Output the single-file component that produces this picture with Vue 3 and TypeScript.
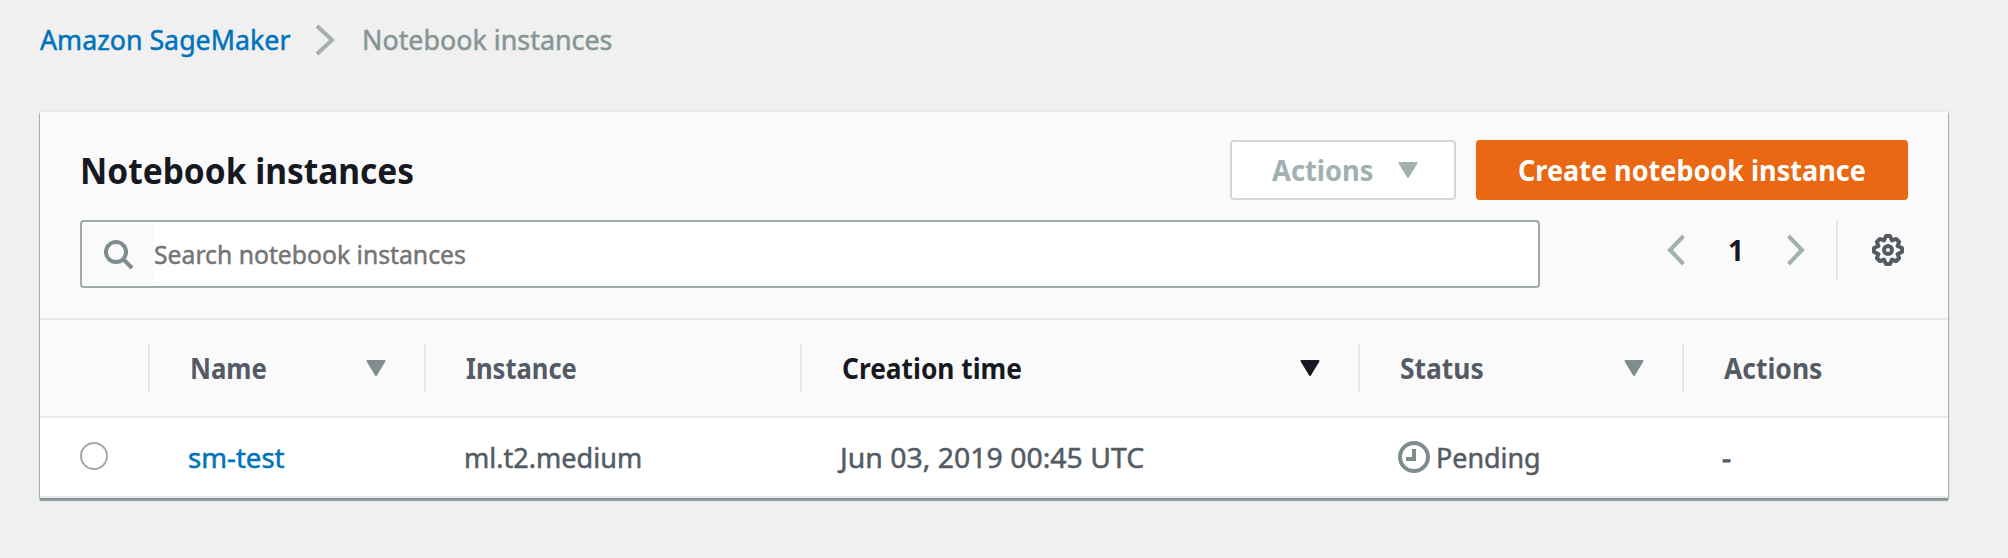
<script setup lang="ts">
interface Column {
  key: string
  label: string
  stretch: number
  sortable: boolean
  active?: boolean
}

interface Instance {
  name: string
  type: string
  created: string
  status: string
  actions: string
}

const columns: Column[] = [
  { key: 'name', label: 'Name', stretch: 0.92, sortable: true },
  { key: 'type', label: 'Instance', stretch: 0.913, sortable: false },
  { key: 'created', label: 'Creation time', stretch: 0.94, sortable: true, active: true },
  { key: 'status', label: 'Status', stretch: 0.943, sortable: true },
  { key: 'actions', label: 'Actions', stretch: 0.945, sortable: false },
]

const instances: Instance[] = [
  { name: 'sm-test', type: 'ml.t2.medium', created: 'Jun 03, 2019 00:45 UTC', status: 'Pending', actions: '-' },
]

const stretchX = (value: number) => ({ transform: `scaleX(${value})` })
</script>

<template>
  <div class="page">
    <nav class="breadcrumb">
      <a class="crumb link"><span class="t" :style="stretchX(0.956)">Amazon SageMaker</span></a>
      <svg class="sep" width="20" height="32" viewBox="0 0 20 32"><path d="M2 2L17 16L2 30" /></svg>
      <span class="crumb current"><span class="t" :style="stretchX(0.959)">Notebook instances</span></span>
    </nav>

    <section class="panel">
      <header class="head">
        <div class="title-row">
          <h1><span class="t" :style="stretchX(0.93)">Notebook instances</span></h1>
          <button class="btn disabled">
            <span class="t" :style="stretchX(0.975)">Actions</span>
            <svg class="caret" width="20" height="16" viewBox="0 0 20 16"><path d="M1.5 1H18.5L10 15Z" /></svg>
          </button>
          <button class="btn primary"><span class="t" :style="stretchX(0.965)">Create notebook instance</span></button>
        </div>
        <div class="filter-row">
          <div class="search">
            <span class="search-icon">
              <svg width="30" height="30" viewBox="0 0 30 30"><circle cx="12" cy="12" r="10" /><path d="M19 19L28 28" /></svg>
            </span>
            <span class="search-input"><span class="t" :style="stretchX(0.951)">Search notebook instances</span></span>
          </div>
          <div class="pager">
            <svg class="arrow" width="20" height="32" viewBox="0 0 20 32"><path d="M17.5 2L4 16L17.5 30" /></svg>
            <span class="page-number">1</span>
            <svg class="arrow" width="20" height="32" viewBox="0 0 20 32"><path d="M2.5 2L16 16L2.5 30" /></svg>
          </div>
          <div class="settings">
            <svg width="32" height="32" viewBox="0 0 32 32">
              <path d="M14 2H18L20 6.4L24.2 4.9L27.1 7.8L25.6 12L30 14V18L25.6 20L27.1 24.2L24.2 27.1L20 25.6L18 30H14L12 25.6L7.8 27.1L4.9 24.2L6.4 20L2 18V14L6.4 12L4.9 7.8L7.8 4.9L12 6.4Z" />
              <circle cx="16" cy="16" r="4" />
            </svg>
          </div>
        </div>
      </header>

      <div class="row columns">
        <div class="cell"></div>
        <div v-for="col in columns" :key="col.key" class="cell column" :class="{ active: col.active }">
          <span class="t" :style="stretchX(col.stretch)">{{ col.label }}</span>
          <svg v-if="col.sortable" class="caret" width="20" height="16" viewBox="0 0 20 16"><path d="M1.5 1H18.5L10 15Z" /></svg>
        </div>
      </div>

      <div v-for="item in instances" :key="item.name" class="row record">
        <div class="cell"><span class="radio"></span></div>
        <div class="cell value link"><span class="t" :style="stretchX(0.985)">{{ item.name }}</span></div>
        <div class="cell value"><span class="t" :style="stretchX(0.966)">{{ item.type }}</span></div>
        <div class="cell value"><span class="t" :style="stretchX(1.015)">{{ item.created }}</span></div>
        <div class="cell value">
          <svg class="clock" width="32" height="32" viewBox="0 0 32 32"><circle cx="16" cy="16" r="14" /><path d="M16 8V18H8" /></svg>
          <span class="t" :style="stretchX(0.96)">{{ item.status }}</span>
        </div>
        <div class="cell value"><span class="t dash">{{ item.actions }}</span></div>
      </div>
    </section>
  </div>
</template>

<style>
body {
  background: #f0f0f0;
}
</style>

<style scoped>
.page {
  box-sizing: border-box;
  width: 2008px;
  height: 558px;
  padding: 20px 60px 0 40px;
  overflow: hidden;
  font-family: "Noto Sans", "Open Sans", sans-serif;
  font-size: 28px;
  line-height: 40px;
  color: #545b64;
  background: #f0f0f0;
}
.t {
  display: inline-block;
  white-space: nowrap;
  transform-origin: left center;
}
.crumb .t,
.search-input .t,
.value .t {
  -webkit-text-stroke: 0.5px currentColor;
}
svg {
  display: block;
  flex: none;
  fill: none;
}
.link {
  color: #0073bb;
}
.breadcrumb {
  display: flex;
  align-items: center;
  height: 40px;
  margin-bottom: 52px;
}
.crumb {
  width: 275px;
  padding-bottom: 2px;
}
.current {
  color: #879596;
}
.sep {
  margin-right: 27px;
  stroke: #a2b0b1;
  stroke-width: 4;
}
.panel {
  width: 1908px;
  height: 386px;
  background: #fff;
  box-shadow: 0 2px 0 #879496, 0 3px 1px rgba(0, 28, 36, 0.35), 1px 1px 1px rgba(0, 28, 36, 0.25), -1px 1px 1px rgba(0, 28, 36, 0.25), 0 -2px 0 #e9eaeb;
}
.head {
  box-sizing: border-box;
  height: 208px;
  padding: 28px 40px 0;
  background: #fafafa;
  border-bottom: 2px solid #e6e8ea;
}
.title-row {
  display: flex;
  height: 60px;
}
h1 {
  flex: 1;
  margin: 0;
  font-size: 36px;
  line-height: 62px;
  color: #16191f;
}
.btn {
  box-sizing: border-box;
  display: flex;
  align-items: center;
  height: 60px;
  padding: 0 0 1px 40px;
  border: 2px solid #d2d8d9;
  border-radius: 4px;
  background: #fff;
  font: 700 28px/40px "Noto Sans", "Open Sans", sans-serif;
}
.disabled {
  width: 226px;
  color: #a2b0b1;
}
.disabled .caret {
  margin-left: 22px;
}
.primary {
  width: 432px;
  margin-left: 20px;
  color: #fff;
  background: #ea6713;
  border-color: #ea6713;
}
.filter-row {
  display: flex;
  margin-top: 20px;
}
.search {
  box-sizing: border-box;
  display: flex;
  width: 1460px;
  height: 68px;
  border: 2px solid #9baaab;
  border-radius: 4px;
  background: #fff;
}
.search-icon {
  width: 72px;
  margin: 2px 0 2px;
  background: #fafafa;
}
.search-icon svg {
  margin: 16px 0 0 22px;
  stroke: #7f8d8e;
  stroke-width: 4;
}
.search-input {
  font-size: 26px;
  line-height: 64px;
  color: #757575;
}
.pager {
  display: flex;
  align-items: center;
  gap: 40px;
  height: 60px;
  margin-left: 126px;
}
.arrow {
  stroke: #a2b0b1;
  stroke-width: 4;
}
.page-number {
  width: 20px;
  font-weight: 700;
  text-align: center;
  color: #16191f;
}
.settings {
  display: flex;
  align-items: center;
  height: 60px;
  margin-left: 30px;
  padding-left: 34px;
  border-left: 2px solid #e6e8ea;
}
.settings svg {
  stroke: #545b64;
  stroke-width: 4;
  stroke-linejoin: round;
}
.row {
  display: grid;
  grid-template-columns: 108px 276px 376px 558px 324px 266px;
  box-sizing: border-box;
  align-items: center;
}
.cell {
  display: flex;
  align-items: center;
}
.columns {
  height: 98px;
  font-weight: 700;
  background: #fafafa;
  border-bottom: 2px solid #e6e8ea;
}
.column {
  box-sizing: border-box;
  justify-content: space-between;
  height: 48px;
  padding: 0 38px 0 40px;
  border-left: 2px solid #e6e8ea;
}
.caret {
  fill: currentColor;
  stroke: currentColor;
  stroke-width: 2;
  stroke-linejoin: round;
}
.column .caret {
  color: #7f8d8e;
}
.column.active,
.column.active .caret {
  color: #16191f;
}
.record {
  height: 80px;
  border-bottom: 2px solid #e6e8ea;
}
.value {
  padding-left: 40px;
}
.value .dash {
  -webkit-text-stroke-width: 1px;
}
.radio {
  box-sizing: border-box;
  width: 28px;
  height: 28px;
  margin: -2px 0 0 40px;
  border: 2px solid #a2aaad;
  border-radius: 50%;
  background: #fff;
}
.clock {
  margin-right: 6px;
  stroke: #7f8d8e;
  stroke-width: 4;
}
</style>
